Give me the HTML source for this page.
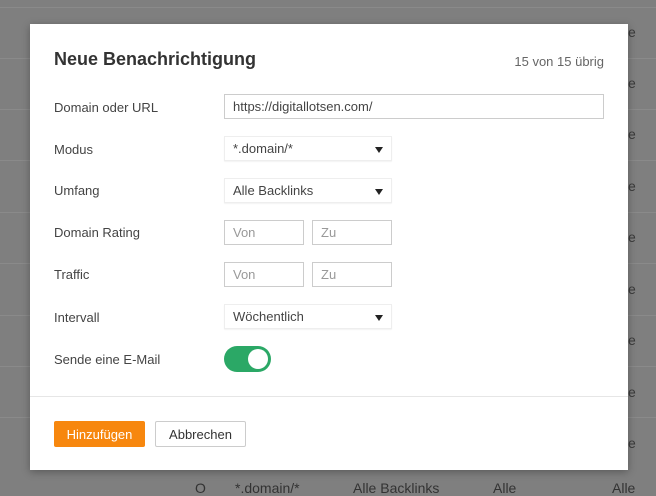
<!DOCTYPE html>
<html><head><style>
*{margin:0;padding:0;box-sizing:border-box}
body{width:656px;height:494px;overflow:hidden;background:#7f7f7f;font-family:"Liberation Sans",Arial,sans-serif;position:relative;color:#333}
.ln{position:absolute;left:0;width:656px;height:1px;background:#8a8a8a}
.e{position:absolute;left:628px;font-size:14px;color:#3a3a3a}
.modal{position:absolute;left:30px;top:24px;width:598px;height:446px;background:#fff;box-shadow:0 2px 8px rgba(0,0,0,.3)}
h1{position:absolute;left:24px;top:25px;font-size:18px;font-weight:bold;color:#333}
.cnt{position:absolute;right:24px;top:30px;font-size:13px;color:#666}
.lab{position:absolute;left:24px;font-size:13px;color:#444}
.in{position:absolute;border:1px solid #ccc;font-size:13px;padding-left:8px;display:flex;align-items:center;height:25px;color:#444}
.sel{border-color:#eee;box-shadow:0 1px 1px rgba(0,0,0,.05)}
.sel:after{content:"";position:absolute;right:8px;top:10px;border-left:4px solid transparent;border-right:4px solid transparent;border-top:6px solid #222}
.ph{color:#999}
.tog{position:absolute;left:194px;top:322px;width:47px;height:26px;border-radius:13px;background:#2ba866}
.tog i{position:absolute;right:3px;top:3px;width:20px;height:20px;border-radius:50%;background:#fff}
.hr{position:absolute;left:0;top:372px;width:598px;height:1px;background:#e6e6e6}
.b1{position:absolute;left:24px;top:397px;width:91px;height:26px;background:#f7870e;color:#fff;font-size:13px;border-radius:2px;display:flex;align-items:center;justify-content:center}
.b2{position:absolute;left:125px;top:397px;width:91px;height:26px;border:1px solid #ccc;color:#333;font-size:13px;border-radius:2px;display:flex;align-items:center;justify-content:center}
.bt{position:absolute;top:480px;font-size:14px;color:#333}
</style></head><body>
<div class="ln" style="top:7px"></div><div class="ln" style="top:58px"></div><div class="ln" style="top:109px"></div><div class="ln" style="top:160px"></div><div class="ln" style="top:212px"></div><div class="ln" style="top:263px"></div><div class="ln" style="top:315px"></div><div class="ln" style="top:366px"></div><div class="ln" style="top:417px"></div>
<div class="e" style="top:24px">e</div><div class="e" style="top:75px">e</div><div class="e" style="top:126px">e</div><div class="e" style="top:178px">e</div><div class="e" style="top:229px">e</div><div class="e" style="top:281px">e</div><div class="e" style="top:332px">e</div><div class="e" style="top:384px">e</div><div class="e" style="top:435px">e</div>
<div class="bt" style="left:195px">O</div><div class="bt" style="left:235px">*.domain/*</div><div class="bt" style="left:353px">Alle Backlinks</div><div class="bt" style="left:493px">Alle</div><div class="bt" style="left:612px">Alle</div>
<div class="modal">
<h1>Neue Benachrichtigung</h1>
<div class="cnt">15 von 15 übrig</div>
<div class="lab" style="top:76px">Domain oder URL</div>
<div class="in" style="left:194px;top:70px;width:380px">https://digitallotsen.com/</div>
<div class="lab" style="top:118px">Modus</div>
<div class="in sel" style="left:194px;top:112px;width:168px">*.domain/*</div>
<div class="lab" style="top:159px">Umfang</div>
<div class="in sel" style="left:194px;top:154px;width:168px">Alle Backlinks</div>
<div class="lab" style="top:201px">Domain Rating</div>
<div class="in ph" style="left:194px;top:196px;width:80px">Von</div>
<div class="in ph" style="left:282px;top:196px;width:80px">Zu</div>
<div class="lab" style="top:243px">Traffic</div>
<div class="in ph" style="left:194px;top:238px;width:80px">Von</div>
<div class="in ph" style="left:282px;top:238px;width:80px">Zu</div>
<div class="lab" style="top:286px">Intervall</div>
<div class="in sel" style="left:194px;top:280px;width:168px">Wöchentlich</div>
<div class="lab" style="top:328px">Sende eine E-Mail</div>
<div class="tog"><i></i></div>
<div class="hr"></div>
<div class="b1">Hinzufügen</div>
<div class="b2">Abbrechen</div>
</div>
</body></html>
